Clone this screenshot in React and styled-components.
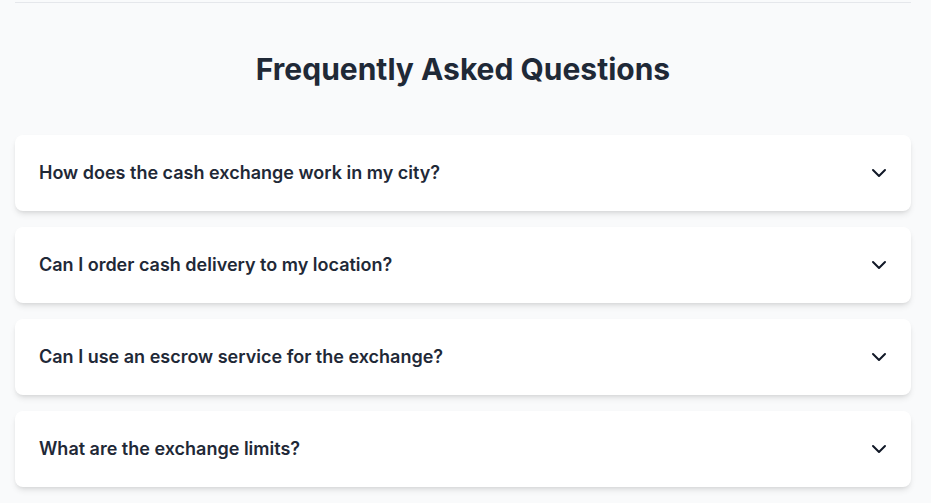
import React, { useState } from 'react';
import styled, { createGlobalStyle } from 'styled-components';
import { ChevronDown } from 'lucide-react';

const GlobalStyle = createGlobalStyle`
  html, body {
    margin: 0;
    padding: 0;
    background-color: #f9fafb;
    font-family: Inter, "Noto Sans", "Liberation Sans", sans-serif;
    color: #1f2937;
  }
  * { box-sizing: border-box; }
`;

const Page = styled.div`
  padding: 2px 20px 16px 15px;
`;

const Section = styled.section`
  border-top: 1px solid #e5e7eb;
  padding-top: 48px;
`;

const Title = styled.h2`
  margin: 0 0 48px;
  font-size: 30px;
  line-height: 36px;
  font-weight: 700;
  text-align: center;
  color: #1f2937;
`;

const List = styled.div`
  display: flex;
  flex-direction: column;
  gap: 16px;
`;

const Item = styled.div`
  background-color: #fff;
  border-radius: 8px;
  box-shadow: 0 4px 6px -1px rgba(0, 0, 0, 0.1), 0 2px 4px -2px rgba(0, 0, 0, 0.1);
`;

const Question = styled.button`
  width: 100%;
  display: flex;
  align-items: center;
  justify-content: space-between;
  padding: 24px 20px 24px 24px;
  background: none;
  border: none;
  cursor: pointer;
  font-family: inherit;
  font-size: 18px;
  line-height: 28px;
  font-weight: 600;
  color: #1f2937;
  text-align: left;
`;

const Icon = styled(ChevronDown)`
  flex-shrink: 0;
  color: #111827;
  transform: rotate(${(p) => (p.$open ? '180deg' : '0deg')});
  transition: transform 0.2s;
`;

const Answer = styled.p`
  margin: 0;
  padding: 0 24px 24px;
  font-size: 16px;
  line-height: 24px;
  color: #4b5563;
`;

const faqs = [
  {
    q: 'How does the cash exchange work in my city?',
    a: 'Choose a rate, agree on the details with the exchanger and meet at the agreed place to complete the exchange.',
  },
  {
    q: 'Can I order cash delivery to my location?',
    a: 'Yes, many exchangers offer delivery. Check the offer details for availability in your area.',
  },
  {
    q: 'Can I use an escrow service for the exchange?',
    a: 'Escrow is available for selected offers to keep both sides protected during the deal.',
  },
  {
    q: 'What are the exchange limits?',
    a: 'Limits depend on the exchanger and are listed in each offer.',
  },
];

const App = () => {
  const [open, setOpen] = useState(null);

  return (
    <Page>
      <GlobalStyle />
      <Section>
        <Title>Frequently Asked Questions</Title>
        <List>
          {faqs.map((item, i) => (
            <Item key={item.q}>
              <Question onClick={() => setOpen(open === i ? null : i)}>
                {item.q}
                <Icon size={24} strokeWidth={2} $open={open === i} />
              </Question>
              {open === i && <Answer>{item.a}</Answer>}
            </Item>
          ))}
        </List>
      </Section>
    </Page>
  );
};

export default App;
